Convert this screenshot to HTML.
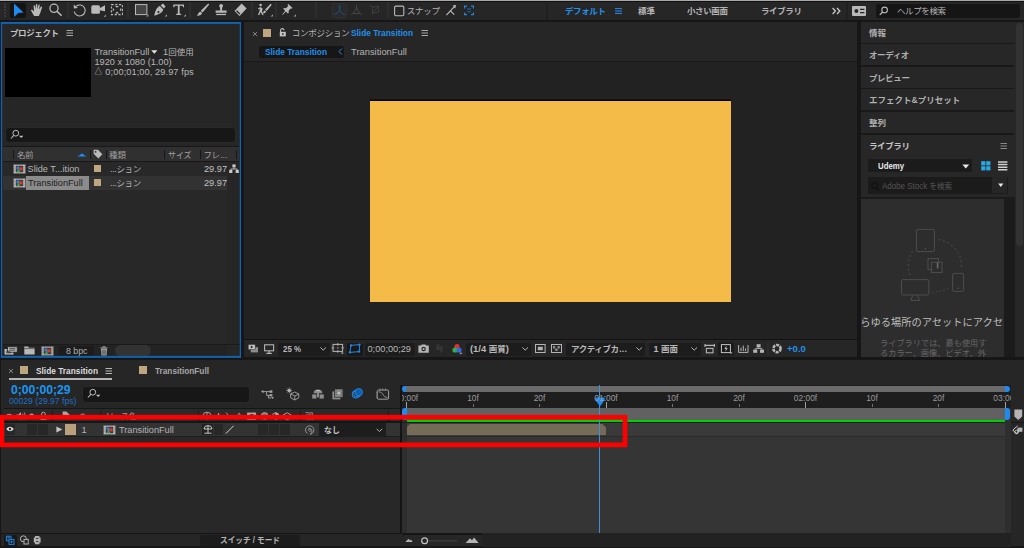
<!DOCTYPE html>
<html lang="ja">
<head>
<meta charset="utf-8">
<title>After Effects - Slide Transition</title>
<style>
html,body{margin:0;padding:0;}
body{width:1024px;height:548px;overflow:hidden;background:#161616;position:relative;
 font-family:"Liberation Sans","Noto Sans CJK JP",sans-serif;font-size:9px;color:#b4b4b4;}
.a{position:absolute;}
.t{position:absolute;white-space:nowrap;line-height:12px;height:12px;z-index:3;}
.j{font-size:8.5px;}
.b{font-weight:bold;}
.blue{color:#2190ea;}
.sep{position:absolute;width:1px;background:#3a3a3a;}
svg{position:absolute;overflow:visible;z-index:2;}
.rl{font-size:8.4px;color:#9a9a9a;}
.dd{position:absolute;background:#1c1c1c;border-radius:2px;}
</style>
</head>
<body>

<!-- ===== TOP TOOLBAR ===== -->
<div class="a" id="topline" style="left:0;top:0;width:1024px;height:1px;background:#a9a9a9;"></div>
<div class="a" id="toolbar" style="left:0;top:1px;width:1024px;height:19px;background:#262626;border-top:1px solid #111;box-sizing:border-box;"></div>


<div id="tb-icons">
<svg width="4" height="16" style="left:3px;top:3px;" viewBox="0 0 4 16"><g fill="#3a3a3a"><rect x="1" y="0" width="2" height="2"/><rect x="1" y="3" width="2" height="2"/><rect x="1" y="6" width="2" height="2"/><rect x="1" y="9" width="2" height="2"/><rect x="1" y="12" width="2" height="2"/></g></svg>
<div class="a" style="left:10px;top:2.5px;width:16px;height:15.5px;background:#141414;border-radius:2px;"></div>
<svg width="1024" height="20" style="left:0;top:0;" viewBox="0 0 1024 20">
 <!-- selection arrow -->
 <path d="M14 3.4 L23.6 12.4 L18.2 12.9 L14 17 Z" fill="#1e8bf0"/>
 <!-- hand -->
 <path d="M34.2 16 C33 14 31.6 11.8 31 10.6 C30.8 9.8 31.8 9.4 32.4 10 L34 11.6 L33.6 6 C33.6 5 34.9 5 35 6 L35.5 9.2 L35.9 4.6 C36 3.7 37.3 3.7 37.3 4.6 L37.4 9 L38.4 5 C38.6 4.1 39.9 4.4 39.7 5.3 L39.1 9.5 L40.8 6.8 C41.3 6 42.4 6.6 42 7.4 C41.3 9.6 40.7 12 40 13.6 C39.6 14.6 39.2 15.2 38.8 16 Z" fill="#b9b9b9"/>
 <!-- zoom -->
 <circle cx="54" cy="8.3" r="4.1" fill="none" stroke="#b9b9b9" stroke-width="1.3"/>
 <path d="M57 11.3 L61.6 15.8" stroke="#b9b9b9" stroke-width="1.6" fill="none"/>
 <rect x="67.5" y="2" width="1" height="16" fill="#363636"/>
 <!-- rotate -->
 <path d="M76.2 6.2 A5.5 5.5 0 1 1 74.3 11.6" fill="none" stroke="#b9b9b9" stroke-width="1.1"/>
 <path d="M73.6 4.6 L74 8.6 L78 8.1 Z" fill="#b9b9b9"/>
 <!-- camera -->
 <rect x="91.3" y="5.2" width="8.6" height="8.6" rx="1.6" fill="#b9b9b9"/>
 <path d="M99.5 8.3 L105 5.3 L105 11.2 L99.5 10.2 Z" fill="#b9b9b9"/>
 <path d="M106 14.5 L106 16.8 L103.7 16.8 Z" fill="#9a9a9a"/>
 <!-- pan behind -->
 <rect x="111.4" y="4.6" width="11" height="10" fill="none" stroke="#b9b9b9" stroke-width="1.1" stroke-dasharray="2.2 1.6"/>
 <path d="M115 6 L119 6 L117 7.8 Z M115 13.4 L119 13.4 L117 11.6 Z M112.8 7.8 L112.8 11.6 L114.4 9.7 Z M121.2 7.8 L121.2 11.6 L119.6 9.7 Z" fill="#b9b9b9"/>
 <rect x="127.5" y="2" width="1" height="16" fill="#363636"/>
 <!-- rectangle -->
 <rect x="135.5" y="4.6" width="11.4" height="10" fill="#454545" stroke="#b9b9b9" stroke-width="1"/>
 <path d="M148.5 14.2 L148.5 16.6 L146.1 16.6 Z" fill="#9a9a9a"/>
 <!-- pen -->
 <path d="M160.6 5.2 L163 3.6 L165.6 6.6 L163.8 8.6 Z" fill="#b9b9b9"/>
 <path d="M159.8 6 L163.2 9.6 C162.6 12 161 14 154.2 15.8 C155.4 10.6 156.6 7.4 159.8 6 Z M158.4 11 A1 1 0 1 0 158.5 11 Z" fill="#b9b9b9" fill-rule="evenodd"/>
 <path d="M167 14.2 L167 16.6 L164.6 16.6 Z" fill="#9a9a9a"/>
 <!-- T -->
 <path d="M173.3 4.4 H184 V7.2 H183 L182.6 5.8 H179.6 V13.6 L181.2 14 V15 H176.2 V14 L177.8 13.6 V5.8 H174.8 L174.3 7.2 H173.3 Z" fill="#b9b9b9"/>
 <path d="M186 14.2 L186 16.6 L183.6 16.6 Z" fill="#9a9a9a"/>
 <rect x="189.5" y="2" width="1" height="16" fill="#363636"/>
 <!-- brush -->
 <path d="M208.2 3.6 L209.2 4.6 L202.6 12.4 L200.8 10.8 Z" fill="#b9b9b9"/>
 <path d="M200.2 11.4 L202 13 C201.6 15 199.6 15.9 196.8 15.7 C198.2 14.6 198.2 12.4 200.2 11.4 Z" fill="#b9b9b9"/>
 <!-- stamp -->
 <path d="M221 4 A2 2 0 0 1 222.2 7.6 L222 10.6 H226.6 V12.8 H215.6 V10.6 H220.2 L220 7.6 A2 2 0 0 1 221 4 Z" fill="#b9b9b9"/>
 <rect x="216.2" y="13.8" width="9.8" height="1.3" fill="#b9b9b9"/>
 <!-- eraser -->
 <path d="M241.6 3.6 L246.6 8.4 L239.6 15.9 L234.5 11.1 Z" fill="#b9b9b9"/>
 <path d="M236.9 10.3 L240.3 13.5 L239.5 14.4 L236 11.2 Z" fill="#262626"/>
 <rect x="251.5" y="2" width="1" height="16" fill="#363636"/>
 <!-- roto -->
 <circle cx="260.6" cy="5" r="1.3" fill="#b9b9b9"/>
 <path d="M258 8.6 L260.4 7 L262.6 8.4 L262 11.4 L263.6 14.8 L262.4 15.2 L260.6 12 L259.2 15.2 L258 14.8 L259.6 10.8 L259.6 8.6 L258.4 9.6 Z" fill="#b9b9b9"/>
 <path d="M270.6 3.8 L271.8 4.8 L266.6 11 L265 9.8 Z M264.6 10.4 L266.2 11.6 C265.6 13.2 264.2 13.6 262.4 13.2 C263.6 12.4 263.4 11 264.6 10.4 Z" fill="#b9b9b9"/>
 <path d="M273 14.2 L273 16.6 L270.6 16.6 Z" fill="#9a9a9a"/>
 <rect x="275.5" y="2" width="1" height="16" fill="#363636"/>
 <!-- pin -->
 <path d="M288 3.8 L292.6 8 L291.4 8.8 L290.6 8.4 L288.6 10.8 L288.8 12.8 L287.8 13.4 L285.9 11.5 L282.6 15 L282.2 14.6 L285.2 10.8 L283.2 8.8 L284 7.9 L286 8.2 L288.2 6 L287.6 5 Z" fill="#b9b9b9"/>
 <path d="M296 14.2 L296 16.6 L293.6 16.6 Z" fill="#9a9a9a"/>
 <rect x="315.5" y="2" width="1" height="16" fill="#363636"/>
 <!-- axis modes (dim) -->
 <rect x="332.5" y="3.5" width="14" height="14" rx="1.5" fill="#2a2a2a" stroke="#303030" stroke-width="1"/>
 <path d="M339.5 5.4 V11 M339.5 11 L335 14.4 M339.5 11 L344 14.4" stroke="#1c4e80" stroke-width="1" fill="none"/>
 <path d="M338.2 6.8 L339.5 5 L340.8 6.8 Z M334.4 13.2 L334.4 15 L336.2 14.8 Z M344.6 13.2 L344.6 15 L342.8 14.8 Z" fill="#1c4e80"/>
 <path d="M356.5 5.4 V8 M353.2 13.6 L356.5 8 L359.8 13.6 Z M351.4 14.6 L353.2 13.6 M361.6 14.6 L359.8 13.6" stroke="#484848" stroke-width="1" fill="none"/>
 <path d="M369.6 5 L372.4 7.2 L378.6 6 L378.6 12 L372.4 13.6 L372.4 7.2 M372.4 13.6 L378.6 6" stroke="#3e3e3e" stroke-width="1" fill="none"/>
 <rect x="387.5" y="2" width="1" height="16" fill="#363636"/>
 <!-- snap checkbox -->
 <rect x="394.6" y="6.1" width="9.2" height="9.6" rx="1.2" fill="none" stroke="#b9b9b9" stroke-width="1.1"/>
 <!-- snap icons -->
 <path d="M446.4 15.2 L450.4 10.8 L454.2 14.6 M450.4 10.8 L455 6" stroke="#b9b9b9" stroke-width="1.1" fill="none"/>
 <path d="M452.6 5.6 L456 5 L455.4 8.4 Z" fill="#b9b9b9"/>
 <g stroke="#2383dc" stroke-width="1.2" fill="none">
  <path d="M464.6 8.4 V6.2 H467 M471 6.2 H473.4 V8.4 M473.4 12.4 V14.6 H471 M467 14.6 H464.6 V12.4"/>
  <path d="M467.6 9 H468.6 M469.6 9 H470.6 M467.6 11.6 H468.6 M469.6 11.6 H470.6" stroke-width="1.4"/>
 </g>
 <rect x="546.5" y="1" width="1" height="19" fill="#1a1a1a"/>
 <!-- workspace menu -->
 <path d="M615 8.6 H622 M615 11 H622 M615 13.4 H622" stroke="#2d8ceb" stroke-width="1" fill="none"/>
 <path d="M832.6 8 L835.4 11 L832.6 14 M837 8 L839.8 11 L837 14" stroke="#c8c8c8" stroke-width="1.3" fill="none"/>
 <rect x="846.5" y="1" width="1" height="19" fill="#1a1a1a"/>
 <!-- sync icon -->
 <rect x="852" y="6" width="14" height="10" rx="1" fill="#b9b9b9"/>
 <circle cx="856.4" cy="11" r="2" fill="#262626"/>
 <path d="M860 9.4 H864.4 M860 12.6 H864.4" stroke="#262626" stroke-width="1.2"/>
</svg>
<div class="t j" id="snap" style="left:406.8px;top:5px;letter-spacing:-0.25px;">スナップ</div>
<div class="t j b blue" id="ws1" style="left:565px;top:5px;letter-spacing:-0.4px;">デフォルト</div>
<div class="t j b" id="ws2" style="left:638px;top:5px;">標準</div>
<div class="t j b" id="ws3" style="left:687px;top:5px;letter-spacing:-0.4px;">小さい画面</div>
<div class="t j b" id="ws4" style="left:761px;top:5px;letter-spacing:-0.4px;">ライブラリ</div>
<div class="a" style="left:876px;top:4px;width:144px;height:13.5px;background:#151515;border-radius:2px;"></div>
<svg width="10" height="10" style="left:879px;top:6px;" viewBox="0 0 10 10"><circle cx="5.6" cy="3.9" r="2.8" fill="none" stroke="#b9b9b9" stroke-width="1.1"/><path d="M3.6 6 L0.8 8.9" stroke="#b9b9b9" stroke-width="1.3"/></svg>
<div class="t j" id="help" style="left:897px;top:5px;letter-spacing:-0.4px;">ヘルプを検索</div>
</div>


<!-- ===== PROJECT PANEL ===== -->
<div class="a" id="project" style="left:1px;top:22px;width:240px;height:335.5px;background:#262626;border:none;box-sizing:border-box;"></div>


<div id="proj-content">
<div class="t j b" id="pj-title" style="left:10px;top:27px;color:#c4c4c4;letter-spacing:-0.4px;">プロジェクト</div>
<svg width="8" height="8" style="left:65.5px;top:29px;" viewBox="0 0 8 8"><path d="M0.5 1.5 H7 M0.5 4 H7 M0.5 6.5 H7" stroke="#a8a8a8" stroke-width="1" fill="none"/></svg>
<div class="a" id="pj-thumb" style="left:5px;top:48px;width:85.5px;height:48.5px;background:#000;"></div>
<div class="t" id="pj-l1" style="left:94.5px;top:46px;color:#b6b6b6;font-size:9.2px;">TransitionFull</div>
<svg width="7" height="4" style="left:151px;top:50.4px;" viewBox="0 0 7 4"><path d="M0.2 0.2 H6.4 L3.3 3.8 Z" fill="#e2e2e2"/></svg>
<div class="t" id="pj-l1b" style="left:163px;top:46px;color:#b6b6b6;font-size:9.2px;">1<span class="j">回使用</span></div>
<div class="t" id="pj-l2" style="left:94.5px;top:55.7px;color:#b6b6b6;font-size:9.2px;">1920 x 1080 (1.00)</div>
<div class="t" id="pj-l3" style="left:94.5px;top:65.6px;color:#b6b6b6;font-size:9.2px;letter-spacing:0.1px;"><span style="font-size:7.6px;font-weight:bold;position:relative;top:-0.3px;margin-right:0.5px;">△</span> 0;00;01;00, 29.97 fps</div>
<div class="a" id="pj-search" style="left:6px;top:128px;width:229px;height:13.5px;background:#171717;border-radius:3px;box-shadow:0 0 0 0.6px #2c2c2c;"></div>
<svg width="14" height="10" style="left:10.4px;top:130.1px;" viewBox="0 0 14 10"><circle cx="5.8" cy="3.2" r="2.9" fill="none" stroke="#b9b9b9" stroke-width="1"/><path d="M3.8 5.3 L0.9 8.5" stroke="#b9b9b9" stroke-width="1.1"/><path d="M9 5.7 H13.4 L11.2 7.9 Z" fill="#c4c4c4"/></svg>
<!-- list area -->
<div class="a" style="left:3px;top:146px;width:236px;height:1px;background:#181818;"></div>
<div class="a" id="pj-head" style="left:3px;top:147px;width:236px;height:14px;background:#303030;"></div>
<div class="a" style="left:3px;top:161px;width:236px;height:1px;background:#181818;"></div>
<div class="a" id="pj-list" style="left:3px;top:162px;width:224px;height:182px;background:#282828;"></div>
<div class="a" id="pj-row2" style="left:3px;top:176px;width:224px;height:13.5px;background:#323232;"></div>
<div class="a" id="pj-sel" style="left:26px;top:176px;width:62.5px;height:13.5px;background:#8b8b8b;"></div>
<div class="sep" style="left:13px;top:150px;height:9px;background:#171717;"></div>
<div class="sep" style="left:89.5px;top:150px;height:9px;background:#171717;"></div>
<div class="sep" style="left:105.5px;top:150px;height:9px;background:#171717;"></div>
<div class="sep" style="left:163.5px;top:150px;height:9px;background:#171717;"></div>
<div class="sep" style="left:199.5px;top:150px;height:9px;background:#171717;"></div>
<div class="sep" style="left:236px;top:150px;height:9px;background:#171717;"></div>
<div class="t j" id="ph1" style="left:17px;top:148.5px;color:#a0a0a0;letter-spacing:-0.5px;">名前</div>
<svg width="10" height="4" style="left:77px;top:153px;" viewBox="0 0 10 4"><path d="M0 3.6 C2 3.4 3.6 0.4 5 0.4 C6.4 0.4 8 3.4 10 3.6 Z" fill="#1e8bf0"/></svg>
<svg width="10" height="10" style="left:92.5px;top:149px;" viewBox="0 0 10 10"><path d="M0.6 0.8 H5 L9.4 5.2 L5.4 9.4 L0.6 4.8 Z" fill="#b9b9b9"/><circle cx="2.6" cy="2.8" r="0.9" fill="#303030"/></svg>
<div class="t j" id="ph2" style="left:109px;top:148.5px;color:#a0a0a0;">種類</div>
<div class="t j" id="ph3" style="left:167.5px;top:148.5px;color:#a0a0a0;transform:scaleX(0.93);transform-origin:0 50%;">サイズ</div>
<div class="t j" id="ph4" style="left:203.5px;top:148.5px;color:#a0a0a0;letter-spacing:-0.4px;">フレ<span style="font-family:'Liberation Sans',sans-serif;letter-spacing:0;margin-left:0.5px;">...</span></div>
<!-- rows -->
<svg width="13" height="10" style="left:13px;top:164px;" viewBox="0 0 13 10"><rect x="0.5" y="0.5" width="12" height="9" fill="#d8d8d8" stroke="#555" stroke-width="0.6"/><rect x="2.6" y="1.6" width="7.8" height="6.8" fill="#3a3a3a"/><circle cx="5" cy="4" r="1.7" fill="#2f7fe0"/><rect x="6" y="3.4" width="3.6" height="3" fill="#d43a2a"/><path d="M3.4 8 L5.4 5 L7.4 8 Z" fill="#3aa64a"/><path d="M1.3 1.6 V8.4 M11.7 1.6 V8.4" stroke="#444" stroke-width="0.8" stroke-dasharray="1 1"/></svg>
<svg width="13" height="10" style="left:13px;top:178px;" viewBox="0 0 13 10"><rect x="0.5" y="0.5" width="12" height="9" fill="#d8d8d8" stroke="#555" stroke-width="0.6"/><rect x="2.6" y="1.6" width="7.8" height="6.8" fill="#3a3a3a"/><circle cx="5" cy="4" r="1.7" fill="#2f7fe0"/><rect x="6" y="3.4" width="3.6" height="3" fill="#d43a2a"/><path d="M3.4 8 L5.4 5 L7.4 8 Z" fill="#3aa64a"/><path d="M1.3 1.6 V8.4 M11.7 1.6 V8.4" stroke="#444" stroke-width="0.8" stroke-dasharray="1 1"/></svg>
<div class="t" id="pr1" style="left:27.5px;top:163px;font-size:9.2px;color:#b6b6b6;">Slide T...ition</div>
<div class="t" id="pr2" style="left:28px;top:177px;font-size:9.2px;color:#1c1c1c;">TransitionFull</div>
<div class="a" style="left:94px;top:165px;width:6.5px;height:6.5px;background:#bea67e;"></div>
<div class="a" style="left:94px;top:179px;width:6.5px;height:6.5px;background:#bea67e;"></div>
<div class="t j" id="pk1" style="left:110px;top:163px;color:#b6b6b6;letter-spacing:-0.4px;"><span style="font-family:'Liberation Sans',sans-serif;font-size:9.2px;">...</span>ション</div>
<div class="t j" id="pk2" style="left:110px;top:177px;color:#b6b6b6;letter-spacing:-0.4px;"><span style="font-family:'Liberation Sans',sans-serif;font-size:9.2px;">...</span>ション</div>
<div class="t" id="pf1" style="left:204px;top:163px;font-size:9.2px;color:#c0c0c0;">29.97</div>
<div class="t" id="pf2" style="left:204px;top:177px;font-size:9.2px;color:#c0c0c0;">29.97</div>
<svg width="10" height="10" style="left:229px;top:164px;" viewBox="0 0 10 10"><rect x="3.4" y="0.4" width="3.2" height="3" fill="#c8c8c8"/><rect x="0.2" y="6" width="3.2" height="3" fill="#c8c8c8"/><rect x="6.6" y="6" width="3.2" height="3" fill="#c8c8c8"/><path d="M5 3.4 V5 M1.8 6 V5 H8.2 V6" stroke="#c8c8c8" stroke-width="0.9" fill="none"/></svg>
<!-- bottom bar -->
<div class="a" style="left:2.5px;top:344px;width:237px;height:11.5px;background:#262626;border-top:1px solid #1a1a1a;box-sizing:border-box;"></div>
<svg width="14" height="10" style="left:4px;top:345.5px;" viewBox="0 0 14 10"><rect x="0.5" y="3" width="9" height="5.6" fill="#b9b9b9"/><rect x="3.6" y="0.8" width="9.6" height="5.4" fill="#b9b9b9" stroke="#262626" stroke-width="0.8"/><path d="M5.4 2.6 H11.4 M5.4 4.2 H11.4 M2 5.2 H6 M2 6.8 H7" stroke="#262626" stroke-width="0.7"/></svg>
<svg width="11" height="9" style="left:24px;top:346px;" viewBox="0 0 11 9"><path d="M0.3 0.6 H4 L5 1.8 H10.6 V8.4 H0.3 Z" fill="#b9b9b9"/><path d="M0.3 2.6 H10.6" stroke="#262626" stroke-width="0.6"/></svg>
<svg width="13" height="10" style="left:41px;top:345.5px;" viewBox="0 0 13 10"><rect x="0.5" y="0.5" width="12" height="9" fill="#c8c8c8" stroke="#555" stroke-width="0.6"/><rect x="2.6" y="1.6" width="7.8" height="6.8" fill="#3a3a3a"/><circle cx="5" cy="4" r="1.7" fill="#2f7fe0"/><rect x="6" y="3.4" width="3.6" height="3" fill="#d43a2a"/><path d="M3.4 8 L5.4 5 L7.4 8 Z" fill="#3aa64a"/><path d="M1.3 1.6 V8.4 M11.7 1.6 V8.4" stroke="#444" stroke-width="0.8" stroke-dasharray="1 1"/></svg>
<div class="a" style="left:3px;top:345px;width:224px;height:11px;background:#232323;"></div>
<div class="a" style="left:59px;top:345.5px;width:35px;height:10px;background:#1c1c1c;border-radius:1px;"></div>
<div class="t" id="bpc" style="left:66px;top:344.5px;font-size:8.8px;color:#b0b0b0;">8 bpc</div>
<svg width="8" height="10" style="left:100px;top:345.5px;" viewBox="0 0 8 10"><path d="M0.3 2 H7.7 M2.8 2 V0.8 H5.2 V2" stroke="#a8a8a8" stroke-width="0.9" fill="none"/><path d="M1 2.8 H7 L6.5 9.6 H1.5 Z" fill="#a8a8a8"/><path d="M2.8 3.8 V8.6 M4 3.8 V8.6 M5.2 3.8 V8.6" stroke="#262626" stroke-width="0.6"/></svg>
<div class="a" style="left:115px;top:345px;width:35.5px;height:10.5px;background:#333;border-radius:5.5px;"></div>
</div>


<svg id="projborder" width="244" height="340" style="left:0;top:20px;z-index:5;" viewBox="0 20 244 340"><g fill="#1064b4"><rect x="0.9" y="22" width="240.15" height="1.9"/><rect x="0.9" y="355.9" width="240.15" height="1.9"/><rect x="0.9" y="22" width="1.25" height="335.8"/><rect x="239.8" y="22" width="1.25" height="335.8"/></g></svg>
<!-- ===== COMP PANEL ===== -->
<div class="a" id="comp" style="left:244px;top:22px;width:613px;height:335px;background:#262626;"></div>


<div id="comp-content">
<svg width="6" height="6" style="left:251.5px;top:31px;" viewBox="0 0 6 6"><path d="M1 1 L5 5 M5 1 L1 5" stroke="#8a8a8a" stroke-width="0.9"/></svg>
<div class="a" style="left:263px;top:29px;width:8px;height:7.5px;background:#bea67e;"></div>
<svg width="8" height="9" style="left:278.5px;top:27.5px;" viewBox="0 0 8 9"><path d="M1.6 4 V2.4 A1.7 1.7 0 0 1 5 2.2" stroke="#c4c4c4" stroke-width="1.1" fill="none"/><rect x="0.8" y="3.8" width="6" height="4.6" fill="#c4c4c4"/><rect x="3.2" y="5.2" width="1.3" height="1.8" fill="#262626"/></svg>
<div class="t j" id="cp-title" style="left:291.7px;top:26.5px;color:#b4b4b4;letter-spacing:-0.25px;">コンポジション</div>
<div class="t b blue" id="cp-title2" style="left:351px;top:26.5px;font-size:9.4px;transform:scaleX(0.888);transform-origin:0 50%;">Slide Transition</div>
<svg width="8" height="8" style="left:420.5px;top:29px;" viewBox="0 0 8 8"><path d="M0.5 1.5 H7 M0.5 4 H7 M0.5 6.5 H7" stroke="#a8a8a8" stroke-width="1" fill="none"/></svg>
<div class="a" style="left:259px;top:45.8px;width:84.5px;height:12px;background:#161616;border-radius:2px;"></div>
<div class="t b blue" id="cp-tab1" style="left:265px;top:45.5px;font-size:9.4px;transform:scaleX(0.888);transform-origin:0 50%;">Slide Transition</div>
<svg width="5" height="7" style="left:337.5px;top:48px;" viewBox="0 0 5 7"><path d="M3.8 0.6 L1 3.5 L3.8 6.4" stroke="#2d8ceb" stroke-width="1" fill="none"/></svg>
<div class="t" id="cp-tab2" style="left:351px;top:45.5px;font-size:9.4px;color:#b4b4b4;">TransitionFull</div>
<div class="a" style="left:244px;top:60.5px;width:613px;height:1.5px;background:#181818;"></div>
<div class="a" style="left:244px;top:62px;width:613px;height:277px;background:#222222;"></div>
<div class="a" style="left:370px;top:99px;width:361px;height:1px;background:#121212;"></div><div class="a" style="left:370px;top:100px;width:361px;height:1px;background:#000;"></div>
<div class="a" id="orange" style="left:370.3px;top:101px;width:360.6px;height:200.8px;background:#f4bb48;"></div>
<div class="a" style="left:244px;top:339px;width:613px;height:1.2px;background:#131313;"></div>
<!-- viewer toolbar -->
<svg width="613" height="17" style="left:244px;top:340px;" viewBox="244 340 613 17">
 <rect x="250.8" y="347.2" width="7.2" height="5.2" fill="#8e8e8e"/>
 <rect x="248.2" y="344.4" width="7" height="5.2" fill="#c0c0c0" stroke="#262626" stroke-width="0.5"/>
 <path d="M250.8 345.6 V348.4 L253.2 347 Z" fill="#262626"/>
 <rect x="264.6" y="344.8" width="9" height="6" fill="none" stroke="#b4b4b4" stroke-width="1.1"/>
 <path d="M269.1 351 V353 M266.4 353.4 H271.8" stroke="#b4b4b4" stroke-width="1.1"/>
 <path d="M320.4 347.4 L323.2 350.2 L326 347.4" stroke="#b4b4b4" stroke-width="1" fill="none"/>
 <rect x="333" y="344.4" width="9.6" height="7" fill="none" stroke="#b4b4b4" stroke-width="1"/>
 <path d="M337.8 343 V345.6 M337.8 350.2 V352.8 M331.6 347.9 H334.2 M341.4 347.9 H344 M337 347.9 H338.6" stroke="#b4b4b4" stroke-width="0.9"/>
 <path d="M340.8 352.6 H343.8 L342.3 354.2 Z" fill="#b4b4b4"/>
 <path d="M351 345.4 L359.6 344.6 L359.2 351.6 L349.8 352.4 Z" fill="none" stroke="#2787e4" stroke-width="1"/>
 <g fill="#2787e4"><rect x="350" y="344.4" width="2" height="2"/><rect x="358.6" y="343.6" width="2" height="2"/><rect x="358.2" y="350.6" width="2" height="2"/><rect x="348.8" y="351.4" width="2" height="2"/></g>
 <path d="M418.4 345.6 H421 L421.8 344.4 H425.4 L426.2 345.6 H428.8 V352.8 H418.4 Z" fill="#b4b4b4"/>
 <circle cx="423.6" cy="349" r="2.2" fill="#262626"/><circle cx="423.6" cy="349" r="1.1" fill="#b4b4b4"/>
 <path d="M437 349.6 A2.6 2.6 0 1 1 440 352 M442 346.4 A2.6 2.6 0 1 1 439.4 344.2" stroke="#3c3c3c" stroke-width="1.1" fill="none"/>
 <circle cx="457" cy="346.6" r="2.6" fill="#e0302a"/><circle cx="455" cy="350" r="2.6" fill="#2fb14a"/><circle cx="459" cy="350" r="2.6" fill="#3467e0"/>
 <path d="M459.4 352.8 H462.4 L460.9 354.4 Z" fill="#b4b4b4"/>
 <path d="M522.4 347.4 L525.2 350.2 L528 347.4" stroke="#b4b4b4" stroke-width="1" fill="none"/>
 <rect x="535.5" y="344.5" width="9.6" height="8" fill="none" stroke="#b4b4b4" stroke-width="1"/><rect x="537.8" y="346.8" width="5" height="3.4" fill="#b4b4b4"/>
 <rect x="551.5" y="344.5" width="10" height="8" fill="none" stroke="#b4b4b4" stroke-width="1"/>
 <path d="M553 346 H555.2 V348.4 H553 Z M557.6 346 H559.8 V348.4 H557.6 Z M555.2 348.4 H557.6 V351 H555.2 Z" fill="#8c8c8c"/>
 <path d="M636.4 347.4 L639.2 350.2 L642 347.4" stroke="#b4b4b4" stroke-width="1" fill="none"/>
 <path d="M691.4 347.4 L694.2 350.2 L697 347.4" stroke="#b4b4b4" stroke-width="1" fill="none"/>
 <path d="M704.4 345.4 H715 M705 344 V347 M714.4 344 V347" stroke="#b4b4b4" stroke-width="1.1" fill="none"/>
 <rect x="706.4" y="348.4" width="6.6" height="4.4" fill="none" stroke="#b4b4b4" stroke-width="1.1"/>
 <rect x="718" y="342.5" width="16" height="13" rx="1.5" fill="#1a1a1a"/>
 <rect x="721.4" y="344.6" width="9" height="8" fill="none" stroke="#c4c4c4" stroke-width="1"/>
 <path d="M726.6 345.6 L724.4 349 H726 L725.2 351.8 L727.8 348.2 H726.2 Z" fill="#c4c4c4"/>
 <path d="M729.6 352.4 H732.6 L731.1 354 Z" fill="#c4c4c4"/>
 <path d="M738.6 345 V352.4 H748 V345 M741 351 V347.6 M743.3 351 V345.6 M745.6 351 V348.4" stroke="#b4b4b4" stroke-width="1" fill="none"/>
 <rect x="756.6" y="344.2" width="4" height="3.2" fill="#b4b4b4"/><rect x="753.2" y="349.6" width="4" height="3.2" fill="#b4b4b4"/><rect x="760" y="349.6" width="4" height="3.2" fill="#b4b4b4"/>
 <path d="M758.6 347.4 V348.6 M755.2 349.6 V348.6 H762 V349.6" stroke="#b4b4b4" stroke-width="0.9" fill="none"/>
 <rect x="767.5" y="343" width="1" height="12" fill="#333"/>
 <circle cx="777" cy="348.6" r="3.6" fill="none" stroke="#b4b4b4" stroke-width="2.6" stroke-dasharray="3 0.9"/>
</svg>
<div class="dd" style="left:278px;top:342.5px;width:51.5px;height:13px;"></div>
<div class="t b" id="vz" style="left:283px;top:343px;font-size:9px;color:#b8b8b8;transform:scaleX(0.877);transform-origin:0 50%;">25 %</div>
<div class="dd" style="left:347px;top:342.5px;width:15.5px;height:13px;background:#181818;"></div>
<div class="dd" style="left:364.5px;top:342.5px;width:50px;height:13px;"></div>
<div class="t" id="vtc" style="left:367.5px;top:343px;font-size:9.2px;color:#b8b8b8;">0;00;00;29</div>
<div class="dd" style="left:466px;top:342.5px;width:64.5px;height:13px;"></div>
<div class="t b" id="vq" style="left:470px;top:343px;font-size:9.4px;color:#b8b8b8;">(1/4 <span class="j">画質</span>)</div>
<div class="dd" style="left:566px;top:342.5px;width:79px;height:13px;"></div>
<div class="t j b" id="vcam" style="left:571px;top:343px;color:#b8b8b8;letter-spacing:-0.4px;">アクティブカ<span style="font-family:'Liberation Sans',sans-serif;letter-spacing:0.2px;margin-left:0.6px;">...</span></div>
<div class="dd" style="left:649px;top:342.5px;width:51.5px;height:13px;"></div>
<div class="t b" id="vv" style="left:653.5px;top:343px;font-size:9px;color:#b8b8b8;">1 <span class="j">画面</span></div>
<div class="t b blue" id="vexp" style="left:787px;top:343px;font-size:9.6px;">+0.0</div>
</div>


<!-- ===== RIGHT PANELS ===== -->


<div id="right-content">
<div class="a" id="rightbg" style="left:861px;top:22px;width:163px;height:335px;background:#272727;"></div>
<div class="a" style="left:1016.2px;top:22.8px;width:6.8px;height:223.4px;background:#333;border-radius:3.4px;"></div>
<div class="a" style="left:861px;top:42.6px;width:153.2px;height:1.7px;background:#191919;"></div>
<div class="a" style="left:861px;top:65.1px;width:153.2px;height:1.7px;background:#191919;"></div>
<div class="a" style="left:861px;top:87.6px;width:153.2px;height:1.7px;background:#191919;"></div>
<div class="a" style="left:861px;top:110.3px;width:153.2px;height:1.7px;background:#191919;"></div>
<div class="a" style="left:861px;top:133.0px;width:153.2px;height:1.7px;background:#191919;"></div>
<div class="t j b" id="rl1" style="left:869px;top:26.5px;color:#b0b0b0;">情報</div>
<div class="t j b" id="rl2" style="left:869px;top:49px;color:#b0b0b0;letter-spacing:-0.4px;">オーディオ</div>
<div class="t j b" id="rl3" style="left:869px;top:71.5px;color:#b0b0b0;letter-spacing:-0.4px;">プレビュー</div>
<div class="t j b" id="rl4" style="left:869px;top:94px;color:#b0b0b0;">エフェクト&amp;プリセット</div>
<div class="t j b" id="rl5" style="left:869px;top:116.5px;color:#b0b0b0;">整列</div>
<div class="t j b" id="rl6" style="left:869px;top:139.5px;color:#c4c4c4;letter-spacing:-0.4px;">ライブラリ</div>
<svg width="8" height="8" style="left:1000px;top:142px;" viewBox="0 0 8 8"><path d="M0.5 1.5 H7 M0.5 4 H7 M0.5 6.5 H7" stroke="#8a8a8a" stroke-width="1" fill="none"/></svg>
<div class="a" style="left:867.5px;top:159.3px;width:104.5px;height:12.8px;background:#1b1b1b;border-radius:1px;"></div>
<div class="t b" id="udemy" style="left:878px;top:159.7px;font-size:9px;color:#e8e8e8;transform:scaleX(0.87);transform-origin:0 50%;">Udemy</div>
<svg width="8" height="5" style="left:961.5px;top:164px;" viewBox="0 0 8 5"><path d="M0.4 0.4 H7.2 L3.8 4.4 Z" fill="#e8e8e8"/></svg>
<svg width="10" height="10" style="left:981px;top:161px;" viewBox="0 0 10 10"><g fill="#29a8e6"><rect x="0.2" y="0.2" width="4.2" height="4.2"/><rect x="5.2" y="0.2" width="4.2" height="4.2"/><rect x="0.2" y="5.2" width="4.2" height="4.2"/><rect x="5.2" y="5.2" width="4.2" height="4.2"/></g></svg>
<svg width="10" height="10" style="left:998px;top:161px;" viewBox="0 0 10 10"><path d="M0 1 H9.4 M0 3.6 H9.4 M0 6.2 H9.4 M0 8.8 H9.4" stroke="#d0d0d0" stroke-width="1.5"/></svg>
<div class="a" style="left:867.5px;top:176.7px;width:140px;height:17.3px;background:#1b1b1b;border-radius:1px;"></div>
<div class="a" style="left:992px;top:177.2px;width:15px;height:16.3px;background:#262626;"></div>
<svg width="9" height="9" style="left:870.5px;top:181.5px;" viewBox="0 0 9 9"><circle cx="3.6" cy="3.6" r="2.8" fill="none" stroke="#101010" stroke-width="1.1"/><path d="M5.6 5.6 L8.2 8.2" stroke="#101010" stroke-width="1.3"/></svg>
<div class="t" id="stock" style="left:882px;top:179.5px;font-size:9px;color:#555;transform:scaleX(0.885);transform-origin:0 50%;">Adobe Stock <span class="j">を検索</span></div>
<svg width="6" height="5" style="left:997.5px;top:182.5px;" viewBox="0 0 6 5"><path d="M0.2 0.4 H5.4 L2.8 4 Z" fill="#e8e8e8"/></svg>
<div class="a" style="left:861px;top:197px;width:153.5px;height:1.5px;background:#1b1b1b;"></div>
<div class="a" id="libbody" style="left:861px;top:198.5px;width:143px;height:158.5px;background:#2d2d2d;overflow:hidden;">
 <div class="t j" id="libh" style="left:-11px;top:118.3px;font-size:10.25px;color:#bdbdbd;">あらゆる場所のアセットにアクセス</div>
 <div class="t j" id="libp1" style="left:19px;top:139.5px;font-size:8.2px;color:#666;">ライブラリでは、最も使用す</div>
 <div class="t j" id="libp2" style="left:19px;top:149.8px;font-size:8.2px;color:#666;">るカラー、画像、ビデオ、外</div>
</div>
<div class="a" style="left:1004px;top:198.5px;width:10.5px;height:158.5px;background:#1b1b1b;"></div>
<svg width="80" height="80" style="left:895px;top:225px;" viewBox="895 225 80 80">
 <g fill="none" stroke="#505050" stroke-width="0.9">
  <path d="M938.6 239.6 A27 27 0 0 1 961.6 269" stroke-dasharray="2 2.6"/>
  <path d="M912.6 251 A27 27 0 0 0 910.4 276" stroke-dasharray="2 2.6"/>
  <path d="M932 292.4 Q944 291 950.6 287.4" stroke-dasharray="1.4 2.4"/>
  <rect x="916.4" y="229.4" width="18" height="22.2" rx="1.6" fill="#2d2d2d"/>
  <rect x="928" y="258.6" width="10.6" height="11" fill="#2d2d2d"/>
  <rect x="931.4" y="262.2" width="10.6" height="10.4" fill="#2d2d2d"/>
  <rect x="952.6" y="273.4" width="11" height="18" rx="1.6" fill="#2d2d2d"/>
  <rect x="901.4" y="279.6" width="27.4" height="15.4" rx="1.4" fill="#2d2d2d"/>
  <path d="M913 295.2 L910.6 300.4 H919.6 L917.2 295.2"/>
 </g>
 <circle cx="925.4" cy="248.6" r="0.7" fill="#606060"/><circle cx="958.1" cy="288.2" r="0.7" fill="#606060"/>
 <path d="M937.6 262.4 V268.4" stroke="#6a6a6a" stroke-width="1.6"/>
</svg>
</div>


<!-- ===== TIMELINE ===== -->
<div class="a" id="timeline" style="left:1.2px;top:360px;width:1022.8px;height:186px;background:#262626;"></div>


<div id="tl-content">
<svg width="6" height="6" style="left:8px;top:368px;" viewBox="0 0 6 6"><path d="M1 1 L5 5 M5 1 L1 5" stroke="#8a8a8a" stroke-width="0.9"/></svg>
<div class="a" style="left:20px;top:366px;width:8px;height:8px;background:#bea67e;"></div>
<div class="t b" id="tt1" style="left:35.5px;top:365px;font-size:9.4px;color:#dcdcdc;transform:scaleX(0.888);transform-origin:0 50%;">Slide Transition</div>
<svg width="8" height="8" style="left:104.5px;top:366.8px;" viewBox="0 0 8 8"><path d="M0.5 1.5 H7 M0.5 4 H7 M0.5 6.5 H7" stroke="#b8b8b8" stroke-width="1" fill="none"/></svg>
<div class="a" style="left:9px;top:378px;width:103px;height:1.8px;background:#b4b4b4;"></div>
<div class="a" style="left:139px;top:366px;width:7.5px;height:8px;background:#bea67e;"></div>
<div class="t b" id="tt2" style="left:155px;top:365px;font-size:9.4px;color:#a8a8a8;transform:scaleX(0.878);transform-origin:0 50%;">TransitionFull</div>
<div class="t b" id="tc1" style="left:11px;top:382px;font-size:12.2px;height:16px;line-height:16px;color:#1a96f3;letter-spacing:0px;transform:none;transform-origin:0 50%;">0;00;00;29</div>
<div class="t" id="tc2" style="left:9px;top:395px;font-size:8.6px;color:#1f6fc2;">00029 (29.97 fps)</div>
<div class="a" id="tl-search" style="left:83px;top:386.5px;width:166px;height:15px;background:#171717;border-radius:3px;box-shadow:0 0 0 0.6px #2c2c2c;"></div>
<svg width="14" height="10" style="left:87.1px;top:389.1px;" viewBox="0 0 14 10"><circle cx="5.8" cy="3.2" r="2.9" fill="none" stroke="#b9b9b9" stroke-width="1"/><path d="M3.8 5.3 L0.9 8.5" stroke="#b9b9b9" stroke-width="1.1"/><path d="M9 5.7 H13.4 L11.2 7.9 Z" fill="#c4c4c4"/></svg>
<!-- timeline tool icons -->
<svg width="140" height="16" style="left:258px;top:386px;" viewBox="258 386 140 16">
 <g stroke="#a4a4a4" fill="none" stroke-width="0.9">
  <path d="M262 391.6 H270 M266.6 391.6 V395.4 H270 M268.4 395.4 V398 H271"/>
 </g>
 <g fill="#a4a4a4"><path d="M261 391.6 L263.4 390 V393.2 Z"/><rect x="269.6" y="390.4" width="2.8" height="2.4"/><rect x="269.6" y="394.2" width="2.8" height="2.2"/><path d="M271 397 H274 L272.5 399 Z"/></g>
 <g stroke="#a4a4a4" fill="none" stroke-width="0.9">
  <path d="M290.6 394 L294.8 392 L298.8 394 V397.8 L294.8 400 L290.6 397.8 Z M290.6 394 L294.8 396 L298.8 394 M294.8 396 V400"/>
  <path d="M289.2 387.6 V393.4 M286.4 390.5 H292 M287.2 388.5 L291.2 392.5 M291.2 388.5 L287.2 392.5" stroke-width="0.8"/>
 </g>
 <circle cx="289.2" cy="390.5" r="1.5" fill="#b4b4b4"/>
 <g fill="#8c8c8c">
  <path d="M313.6 393.2 A4.4 3.6 0 0 1 322.4 393.2 Z"/><rect x="317" y="390.4" width="2" height="7"/>
  <rect x="312.2" y="394.4" width="4.2" height="4.2"/><rect x="319.6" y="394.4" width="4.2" height="4.2"/>
 </g>
 <path d="M316 390.6 H320" stroke="#d0d0d0" stroke-width="0.8"/>
 <g fill="#8c8c8c"><rect x="332.4" y="391.4" width="8" height="8" /><rect x="334.6" y="389" width="8.4" height="8.2" stroke="#262626" stroke-width="0.7"/></g>
 <path d="M336 390.4 V396 M341.6 390.4 V396" stroke="#444" stroke-width="0.8" stroke-dasharray="0.9 0.9"/>
 <rect x="337.6" y="392.2" width="2.6" height="1.6" fill="#c8c8c8"/>
 <g fill="none" stroke="#1f7fd8" stroke-width="1.1"><circle cx="355.8" cy="394.4" r="3.5"/><circle cx="357.2" cy="393.4" r="3.5"/></g>
 <circle cx="358.8" cy="392.2" r="3.7" fill="#0f5eb0" stroke="#1f7fd8" stroke-width="1"/>
 <rect x="377.2" y="390" width="11.4" height="9.2" rx="1.2" fill="none" stroke="#a0a0a0" stroke-width="1"/>
 <path d="M378.6 391.8 C384 391.8 382 397.4 387.4 397.4" stroke="#a0a0a0" stroke-width="0.9" fill="none"/>
 <path d="M380 388.6 V390 M382.8 388.6 V390 M385.6 388.6 V390 M376.4 392.4 H377.4 M376.4 395 H377.4 M376.4 397.4 H377.4" stroke="#a0a0a0" stroke-width="0.8"/>
</svg>
<div class="a" id="tl-left" style="left:1.2px;top:437px;width:399px;height:96px;background:#282828;"></div>
<!-- column header -->
<div class="a" style="left:4px;top:407.5px;width:397px;height:1px;background:#161616;"></div>
<div class="a" id="tl-head" style="left:4px;top:408.5px;width:397px;height:12.5px;background:#2a2a2a;"></div>
<div class="a" style="left:4px;top:421px;width:397px;height:1.5px;background:#161616;"></div>
<svg width="400" height="12" style="left:0px;top:410px;" viewBox="0 409 400 12">
 <g fill="#a8a8a8">
  <path d="M5.4 415 Q9.2 410.6 13 415 Q9.2 419.4 5.4 415 Z"/>
  <path d="M16.4 413.4 H18.4 L21 411 V419 L18.4 416.6 H16.4 Z"/>
  <circle cx="31.6" cy="415" r="2.5"/>
  <rect x="40.4" y="414.4" width="6" height="4.6"/>
  <path d="M62.6 410.6 H66.4 L70.4 414.6 L66.8 418.4 L62.6 414.4 Z"/>
 </g>
 <circle cx="9.2" cy="415" r="1.3" fill="#2a2a2a"/>
 <path d="M22.6 412.6 Q24.2 415 22.6 417.4 M24.2 411.4 Q26.6 415 24.2 418.6" stroke="#a8a8a8" stroke-width="0.8" fill="none"/>
 <path d="M41.6 414.4 V413 A1.8 1.8 0 0 1 45.2 413 V414.4" stroke="#a8a8a8" stroke-width="1" fill="none"/>
 <rect x="52" y="410" width="1" height="10" fill="#1a1a1a"/><rect x="100.5" y="410" width="1" height="10" fill="#1a1a1a"/><rect x="198" y="410" width="1" height="10" fill="#1a1a1a"/><rect x="300" y="410" width="1" height="10" fill="#1a1a1a"/><rect x="388" y="410" width="1" height="10" fill="#1a1a1a"/>
 <g stroke="#a8a8a8" stroke-width="0.9" fill="none">
  <path d="M203 414.6 A4 3.4 0 0 1 211 414.6 Z M207 411 V418.6 M203.4 417 H210.6"/>
  <path d="M218.6 411.6 L219.6 414 L222 414.2 L220.2 415.8 L220.8 418.2 L218.6 417 L216.4 418.2 L217 415.8 L215.2 414.2 L217.6 414 Z" fill="#a8a8a8" stroke="none"/>
  <path d="M226 411.6 L231.6 418"/>
  <path d="M237 418.6 C238 411 240 411 240 414.6 M236.6 414.6 H241 M241.6 418 L244 415 M241.6 415 L244 418"/>
  <rect x="247.6" y="412" width="8" height="6.4" fill="#a8a8a8"/>
  <circle cx="264.6" cy="415" r="3.4" fill="#777"/>
  <circle cx="275.6" cy="415" r="3.2"/><path d="M275.6 411.8 A3.2 3.2 0 0 1 275.6 418.2 Z" fill="#a8a8a8"/>
  <path d="M283.6 413.6 L287.2 411.8 L290.8 413.6 V417 L287.2 418.8 L283.6 417 Z M283.6 413.6 L287.2 415.2 L290.8 413.6 M287.2 415.2 V418.8"/>
 </g>
 <path d="M250 413.6 H253.4 M250 416.6 H253.4" stroke="#2a2a2a" stroke-width="0.9"/>
</svg>
<div class="t" id="th-num" style="left:80px;top:410px;font-size:8.6px;color:#a0a0a0;">#</div>
<div class="t j" id="th-src" style="left:106px;top:410px;color:#a0a0a0;transform:scaleX(0.9);transform-origin:0 50%;">ソース名</div>
<div class="t j" id="th-par" style="left:305px;top:410px;color:#a0a0a0;">親</div>
<!-- layer row -->
<div class="a" id="tl-row" style="left:4px;top:422.5px;width:397px;height:13.5px;background:#333333;"></div>
<div class="a" style="left:4px;top:436px;width:397px;height:1px;background:#1d1d1d;"></div>
<div class="a" style="left:5px;top:423.5px;width:9.5px;height:11.5px;background:#272727;"></div>
<svg width="8" height="6.2" style="left:5.6px;top:426px;" viewBox="0 0 9 7"><path d="M0.2 3.5 Q4.5 -1.6 8.8 3.5 Q4.5 8.6 0.2 3.5 Z" fill="#e6e6e6"/><circle cx="4.5" cy="3.5" r="1.5" fill="#272727"/></svg>
<div class="a" style="left:27px;top:423.5px;width:9.8px;height:11.5px;background:#272727;"></div>
<div class="a" style="left:38px;top:423.5px;width:10px;height:11.5px;background:#272727;"></div>
<svg width="7" height="7" style="left:55.5px;top:426px;" viewBox="0 0 7 7"><path d="M0.4 0.4 L6.4 3.5 L0.4 6.6 Z" fill="#c4c4c4"/></svg>
<div class="a" style="left:65px;top:424px;width:11px;height:11px;background:#b8a17c;"></div>
<div class="t" id="lnum" style="left:81.5px;top:423.5px;font-size:9.2px;color:#b4b4b4;">1</div>
<svg width="13" height="10" style="left:102.5px;top:424.5px;" viewBox="0 0 13 10"><rect x="0.5" y="0.5" width="12" height="9" fill="#d8d8d8" stroke="#555" stroke-width="0.6"/><rect x="2.6" y="1.6" width="7.8" height="6.8" fill="#3a3a3a"/><circle cx="5" cy="4" r="1.7" fill="#2f7fe0"/><rect x="6" y="3.4" width="3.6" height="3" fill="#d43a2a"/><path d="M3.4 8 L5.4 5 L7.4 8 Z" fill="#3aa64a"/><path d="M1.3 1.6 V8.4 M11.7 1.6 V8.4" stroke="#444" stroke-width="0.8" stroke-dasharray="1 1"/></svg>
<div class="t" id="lname" style="left:119px;top:423.5px;font-size:9.2px;color:#b4b4b4;">TransitionFull</div>
<div class="a" style="left:202px;top:423.5px;width:10.5px;height:11.5px;background:#222;"></div>
<svg width="10" height="10" style="left:202.5px;top:424.5px;" viewBox="0 0 10 10"><path d="M1 4 A4 3.4 0 0 1 9 4 Z M5 0.6 V8 M1.4 8.2 H8.6" stroke="#d8d8d8" stroke-width="0.9" fill="none"/></svg>
<div class="a" style="left:213.5px;top:423.5px;width:9px;height:11.5px;background:#272727;"></div>
<svg width="10" height="10" style="left:225px;top:424.5px;" viewBox="0 0 10 10"><path d="M0.8 8.6 L8.6 0.8" stroke="#d8d8d8" stroke-width="1"/></svg>
<div class="a" style="left:258px;top:423.5px;width:9.5px;height:11.5px;background:#272727;"></div>
<div class="a" style="left:269px;top:423.5px;width:9.5px;height:11.5px;background:#272727;"></div>
<div class="a" style="left:280px;top:423.5px;width:10px;height:11.5px;background:#272727;"></div>
<svg width="10" height="10" style="left:304.5px;top:424.5px;" viewBox="0 0 10 10"><path d="M2.2 8.4 A4.2 4.2 0 1 1 5 9.2" stroke="#9a9a9a" stroke-width="0.9" fill="none"/><path d="M5 9.2 A2.6 2.6 0 1 0 3.2 3.6 M5 4 A1.2 1.2 0 1 1 4.9 4" stroke="#9a9a9a" stroke-width="0.85" fill="none"/></svg>
<div class="a" style="left:319px;top:423px;width:66.5px;height:12.5px;background:#1d1d1d;border-radius:1px;"></div>
<div class="t j b" id="lpar" style="left:324px;top:423.5px;color:#c4c4c4;transform:scaleX(0.93);transform-origin:0 50%;">なし</div>
<svg width="7" height="5" style="left:375.5px;top:427.5px;" viewBox="0 0 7 5"><path d="M0.6 0.8 L3.4 3.6 L6.2 0.8" stroke="#b4b4b4" stroke-width="1" fill="none"/></svg>
<!-- time area -->
<div class="a" style="left:400.3px;top:385px;width:1.7px;height:148px;background:#141414;"></div>
<div class="a" id="ruler" style="left:402px;top:385px;width:608.5px;height:23px;background:#1e1e1e;"></div>
<div class="a" id="nav" style="left:403px;top:385.5px;width:605px;height:6.5px;background:#6b6b6b;border-radius:2px;"></div>
<div class="a" style="left:401.5px;top:385.5px;width:4.5px;height:6.5px;background:#1e8bf0;border-radius:3px 0 0 3px;"></div>
<div class="a" style="left:1005px;top:385.5px;width:5px;height:6.5px;background:#1e8bf0;border-radius:0 3px 3px 0;"></div>
<div class="a" id="rulerclip" style="left:402px;top:385px;width:608.5px;height:23px;overflow:hidden;">
<div class="a" style="left:4.0px;top:16.5px;width:1px;height:6px;background:#a0a0a0;"></div><div class="t rl" style="left:-15.5px;top:7px;width:40px;text-align:center;">00:00f</div>
<div class="a" style="left:70.5px;top:19px;width:1px;height:3px;background:#707070;"></div><div class="t rl" style="left:51.0px;top:7px;width:40px;text-align:center;">10f</div>
<div class="a" style="left:137.0px;top:19px;width:1px;height:3px;background:#707070;"></div><div class="t rl" style="left:117.5px;top:7px;width:40px;text-align:center;">20f</div>
<div class="a" style="left:203.5px;top:16.5px;width:1px;height:6px;background:#a0a0a0;"></div><div class="t rl" style="left:184.0px;top:7px;width:40px;text-align:center;">01:00f</div>
<div class="a" style="left:270.0px;top:19px;width:1px;height:3px;background:#707070;"></div><div class="t rl" style="left:250.5px;top:7px;width:40px;text-align:center;">10f</div>
<div class="a" style="left:336.5px;top:19px;width:1px;height:3px;background:#707070;"></div><div class="t rl" style="left:317.0px;top:7px;width:40px;text-align:center;">20f</div>
<div class="a" style="left:403.0px;top:16.5px;width:1px;height:6px;background:#a0a0a0;"></div><div class="t rl" style="left:383.5px;top:7px;width:40px;text-align:center;">02:00f</div>
<div class="a" style="left:469.5px;top:19px;width:1px;height:3px;background:#707070;"></div><div class="t rl" style="left:450.0px;top:7px;width:40px;text-align:center;">10f</div>
<div class="a" style="left:536.0px;top:19px;width:1px;height:3px;background:#707070;"></div><div class="t rl" style="left:516.5px;top:7px;width:40px;text-align:center;">20f</div>
<div class="a" style="left:602.5px;top:16.5px;width:1px;height:6px;background:#a0a0a0;"></div><div class="t rl" style="left:583.0px;top:7px;width:40px;text-align:center;">03:00f</div>
</div>
<div class="a" id="track-bg" style="left:402px;top:408px;width:608.5px;height:125px;background:#2e2e2e;"></div>
<div class="a" id="track" style="left:406.5px;top:408px;width:598.5px;height:125px;background:#353535;"></div>
<div class="a" id="work" style="left:406.5px;top:408px;width:598.5px;height:11.5px;background:#616161;"></div>
<div class="a" style="left:402px;top:408px;width:4.5px;height:11.5px;background:#1e8bf0;border-radius:3px 0 0 3px;"></div>
<div class="a" style="left:1005px;top:408px;width:4.5px;height:11.5px;background:#1e8bf0;border-radius:0 3px 3px 0;"></div>
<div class="a" id="green" style="left:406.5px;top:419.5px;width:598.5px;height:2.5px;background:#00d000;"></div>
<div class="a" style="left:402px;top:422px;width:603px;height:1px;background:#1c1c1c;"></div>
<div class="a" id="lrow" style="left:406.5px;top:423px;width:598.5px;height:13px;background:#3a3a3a;"></div>
<div class="a" style="left:402px;top:436px;width:603px;height:1px;background:#2a2a2a;"></div>
<div class="a" id="lbar" style="left:406.5px;top:423.8px;width:199.5px;height:11.4px;background:#756b57;border-radius:0.5px;"></div>
<svg width="4" height="4" style="left:407px;top:424px;" viewBox="0 0 4 4"><path d="M0 0 H3 L0 3 Z" fill="#4a4436"/></svg>
<svg width="4" height="4" style="left:602px;top:424px;" viewBox="0 0 4 4"><path d="M0.6 0 H4 V3.4 Z" fill="#3c372c"/></svg>
<!-- right column -->
<div class="a" style="left:1010.5px;top:385px;width:13.5px;height:161px;background:#262626;"></div>
<svg width="9" height="12" style="left:1014px;top:409px;" viewBox="0 0 9 12"><path d="M0.4 0.4 H8.2 V7.6 L4.3 11 L0.4 7.6 Z" fill="#b4b4b4"/></svg>
<div class="a" style="left:1010.5px;top:422px;width:13.5px;height:1px;background:#161616;"></div>
<svg width="11" height="10" style="left:1012px;top:424.5px;" viewBox="0 0 11 10"><rect x="5.4" y="2.6" width="5" height="4.2" fill="#b4b4b4"/><path d="M5.6 0.8 L0.8 5 L4 8.6 L6.6 6.4" stroke="#d0d0d0" stroke-width="1" fill="none"/><circle cx="4.6" cy="7" r="1.8" fill="none" stroke="#d0d0d0" stroke-width="0.9"/></svg>
<!-- playhead -->
<div class="a" id="ph-line" style="left:598.8px;top:385px;width:1.4px;height:148px;background:#3b8fdb;"></div>
<svg width="10" height="10" style="left:594.5px;top:397px;" viewBox="0 0 10 10"><path d="M0.4 0.6 H9.6 V3 L5 9.4 L0.4 3 Z" fill="#1e8bf0"/></svg>
<!-- bottom bar -->
<div class="a" style="left:0px;top:533px;width:401px;height:1px;background:#151515;"></div>
<div class="a" style="left:0px;top:546px;width:1024px;height:2px;background:#171717;"></div>
<div class="a" style="left:482px;top:533px;width:528.5px;height:13.5px;background:#222222;"></div>
<div class="a" style="left:402px;top:533px;width:80px;height:1.5px;background:#151515;"></div>
<div class="a" style="left:4px;top:534.5px;width:12.5px;height:11.5px;background:#181818;border-radius:1px;"></div>
<svg width="50" height="12" style="left:0px;top:534px;" viewBox="0 534 50 12">
 <g stroke="#2383dc" fill="none" stroke-width="1"><rect x="6.4" y="536.2" width="4.6" height="4.6"/><rect x="9" y="539.4" width="5" height="5" fill="#181818"/><path d="M11.5 540.6 V543.2 M10.2 541.9 H12.8 M7.6 537.6 H9.8 M7.6 539.2 H8.4"/></g>
 <g stroke="#b4b4b4" fill="none" stroke-width="1"><circle cx="23.4" cy="538.8" r="3"/><rect x="24" y="539.4" width="4.2" height="4.6" fill="#262626"/></g>
 <g fill="#b4b4b4"><path d="M35 536 H39.4 V537.6 H40.6 V542.4 H39.4 V544.2 H35 V542.4 H33.8 V537.6 H35 Z"/></g>
 <path d="M36 538.4 H38.4 M36 541.6 H38.4" stroke="#262626" stroke-width="0.9"/>
</svg>
<div class="a" style="left:200px;top:535px;width:100px;height:11px;background:#1c1c1c;border-radius:2px;"></div>
<div class="t j b" id="swmode" style="left:220px;top:534.5px;color:#b4b4b4;font-size:8.2px;transform:scaleX(0.935);transform-origin:0 50%;">スイッチ / モード</div>
<svg width="80" height="12" style="left:402px;top:534px;" viewBox="402 534 80 12">
 <path d="M405.4 542 L408.4 538.8 L410 540.4 L411 539.6 L412.6 542 Z" fill="#b4b4b4"/>
 <circle cx="424.6" cy="540.8" r="2.9" fill="#262626" stroke="#c4c4c4" stroke-width="1.2"/>
 <path d="M428 540.8 H457" stroke="#3c3c3c" stroke-width="1.4"/>
 <path d="M465.6 543 L470 538.2 L472 540.2 L474 537.6 L478.6 543 Z" fill="#b4b4b4"/>
</svg>
<!-- red annotation rectangle -->
<svg id="redrect" width="640" height="40" style="left:0;top:410px;z-index:10;" viewBox="0 410 640 40"><rect x="1.85" y="417.2" width="623.2" height="27.7" fill="none" stroke="#fe0000" stroke-width="4.7"/></svg>
</div>


</body>
</html>
